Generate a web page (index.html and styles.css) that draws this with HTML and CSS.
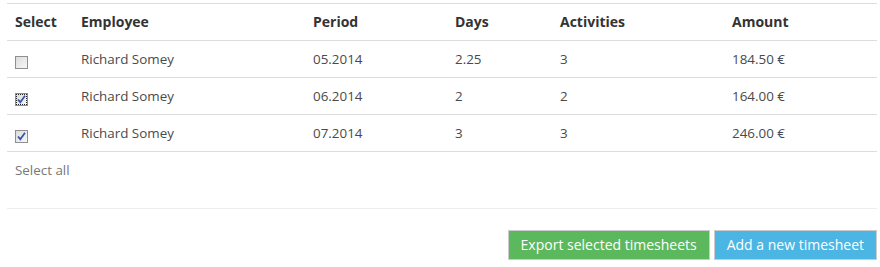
FILE: index.html
```html
<!DOCTYPE html>
<html>
<head>
<meta charset="utf-8">
<link rel="stylesheet" href="styles.css">
</head>
<body>
<div class="page">
  <table class="sheets">
    <thead>
      <tr>
        <th class="c-sel">Select</th>
        <th class="c-emp">Employee</th>
        <th class="c-per">Period</th>
        <th class="c-days">Days</th>
        <th class="c-act">Activities</th>
        <th class="c-amt">Amount</th>
      </tr>
    </thead>
    <tbody>
      <tr>
        <td><input type="checkbox" class="cb"></td>
        <td>Richard Somey</td>
        <td>05.2014</td>
        <td>2.25</td>
        <td>3</td>
        <td>184.50 €</td>
      </tr>
      <tr>
        <td><input type="checkbox" class="cb focus" checked></td>
        <td>Richard Somey</td>
        <td>06.2014</td>
        <td>2</td>
        <td>2</td>
        <td>164.00 €</td>
      </tr>
      <tr>
        <td><input type="checkbox" class="cb" checked></td>
        <td>Richard Somey</td>
        <td>07.2014</td>
        <td>3</td>
        <td>3</td>
        <td>246.00 €</td>
      </tr>
    </tbody>
  </table>
  <div class="select-all">Select all</div>
  <hr class="sep">
  <div class="actions">
    <button class="btn btn-green">Export selected timesheets</button>
    <button class="btn btn-blue">Add a new timesheet</button>
  </div>
</div>
</body>
</html>
```

FILE: styles.css
```css
html, body {
  margin: 0;
  padding: 0;
  background: #fff;
}
body {
  font-family: "Open Sans", "Liberation Sans", sans-serif;
  font-size: 13.4px;
  color: #4a4a4a;
}
.page {
  margin: 3px 3px 0 7px;
  width: 870px;
}
.sheets {
  width: 870px;
  border-collapse: collapse;
  table-layout: fixed;
  border-top: 1px solid #ddd;
}
.sheets th,
.sheets td {
  padding: 8px;
  line-height: 20px;
  text-align: left;
  vertical-align: top;
  border-bottom: 1px solid #ddd;
}
.sheets th {
  font-weight: 700;
  font-size: 14px;
  color: #333;
}
.c-sel { width: 50px; }
.c-emp { width: 216px; }
.c-per { width: 126px; }
.c-days { width: 89px; }
.c-act { width: 156px; }
.c-amt { width: auto; }
.cb {
  -webkit-appearance: none;
  appearance: none;
  display: block;
  width: 13px;
  height: 13px;
  margin: 7px 0 0 0;
  border: 1px solid #8f8f8f;
  background: linear-gradient(135deg, #dcdcdc 0%, #f7f7f7 100%);
  box-sizing: border-box;
}
.cb:checked {
  background-image: url("data:image/svg+xml;utf8,<svg xmlns='http://www.w3.org/2000/svg' width='11' height='11' viewBox='0 0 11 11'><path d='M2 5.5 L4.3 8.2 L9 1.8' fill='none' stroke='%233a56a8' stroke-width='1.8'/></svg>"), linear-gradient(135deg, #dcdcdc 0%, #f7f7f7 100%);
  background-repeat: no-repeat;
  background-position: center;
}
.cb.focus {
  outline: 1px dotted #222;
  outline-offset: -2px;
}
.select-all {
  padding: 8px;
  line-height: 20px;
  color: #777;
}
.sep {
  border: 0;
  border-top: 1px solid #eee;
  margin: 20px 0 21px 0;
}
.actions {
  display: flex;
  justify-content: flex-end;
  gap: 4px;
}
.btn {
  font-family: "Open Sans", "Liberation Sans", sans-serif;
  font-size: 14px;
  color: #fff;
  height: 30px;
  padding: 0 12px;
  border: 1px solid #ccc;
  line-height: 28px;
  cursor: pointer;
}
.btn-green { background: #5cb85c; }
.btn-blue { background: #4bb5e3; }
```
